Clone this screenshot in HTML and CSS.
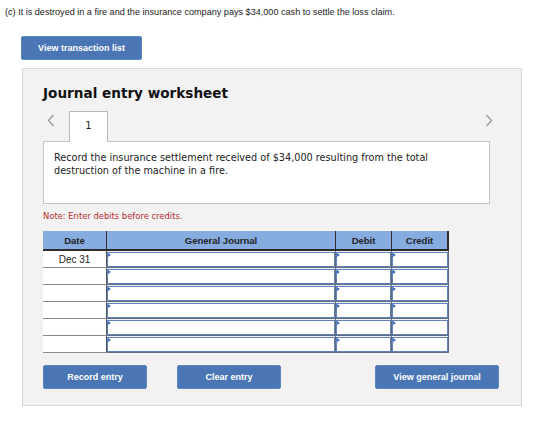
FILE: index.html
```html
<!DOCTYPE html>
<html>
<head>
    <title>Journal entry worksheet</title>
    <link rel="stylesheet" href="styles.css">
</head>
<body>
    <p class="question">(<i>c</i>) It is destroyed in a fire and the insurance company pays $34,000 cash to settle the loss claim.</p>

    <button class="btn btn-list">View transaction list</button>

    <div class="worksheet">
        <h2>Journal entry worksheet</h2>

        <div class="tabs">
            <span class="arrow">
                <svg width="8" height="13" viewBox="0 0 8 13"><path d="M6.5 1 L1.5 6.5 L6.5 12" fill="none" stroke="#9a9a9a" stroke-width="1.4"/></svg>
            </span>
            <span class="tab">1</span>
            <span class="arrow right">
                <svg width="8" height="13" viewBox="0 0 8 13"><path d="M1.5 1 L6.5 6.5 L1.5 12" fill="none" stroke="#9a9a9a" stroke-width="1.4"/></svg>
            </span>
        </div>

        <div class="task">
            Record the insurance settlement received of $34,000 resulting from the total destruction of the machine in a fire.
        </div>

        <p class="note">Note: Enter debits before credits.</p>

        <table class="journal">
            <thead>
                <tr>
                    <th class="c-date">Date</th>
                    <th class="c-acct">General Journal</th>
                    <th class="c-num">Debit</th>
                    <th class="c-num">Credit</th>
                </tr>
            </thead>
            <tbody>
                <tr>
                    <td class="date">Dec 31</td>
                    <td class="in"><div class="box"></div></td>
                    <td class="in"><div class="box"></div></td>
                    <td class="in"><div class="box"></div></td>
                </tr>
                <tr>
                    <td class="date"></td>
                    <td class="in"><div class="box"></div></td>
                    <td class="in"><div class="box"></div></td>
                    <td class="in"><div class="box"></div></td>
                </tr>
                <tr>
                    <td class="date"></td>
                    <td class="in"><div class="box"></div></td>
                    <td class="in"><div class="box"></div></td>
                    <td class="in"><div class="box"></div></td>
                </tr>
                <tr>
                    <td class="date"></td>
                    <td class="in"><div class="box"></div></td>
                    <td class="in"><div class="box"></div></td>
                    <td class="in"><div class="box"></div></td>
                </tr>
                <tr>
                    <td class="date"></td>
                    <td class="in"><div class="box"></div></td>
                    <td class="in"><div class="box"></div></td>
                    <td class="in"><div class="box"></div></td>
                </tr>
                <tr>
                    <td class="date"></td>
                    <td class="in"><div class="box"></div></td>
                    <td class="in"><div class="box"></div></td>
                    <td class="in"><div class="box"></div></td>
                </tr>
            </tbody>
        </table>

        <div class="actions">
            <button class="btn btn-record">Record entry</button>
            <button class="btn btn-clear">Clear entry</button>
            <button class="btn btn-view">View general journal</button>
        </div>
    </div>
</body>
</html>
```

FILE: styles.css
```css
body {
    margin: 0;
    background: white;
    font-family: "Liberation Sans", Arial, sans-serif;
    color: #222;
}
.question {
    margin: 0;
    padding: 6px 0 0 5px;
    font-size: 9.1px;
    line-height: 12px;
}
.btn {
    display: block;
    background: #4a76b5;
    color: white;
    border: 1px solid #5c86c0;
    border-radius: 2px;
    font-family: "Liberation Sans", Arial, sans-serif;
    font-weight: bold;
    font-size: 9px;
    height: 24px;
    padding: 0;
    cursor: pointer;
}
.btn-list {
    margin: 18px 0 0 21px;
    width: 121px;
}
.worksheet {
    margin: 8px 0 0 22px;
    width: 468px;
    height: 320px;
    padding: 8px 10px 8px 20px;
    background: #f2f2f2;
    border: 1px solid #d6d6d6;
    border-top-color: #dcdcdc;
}
.worksheet h2 {
    margin: 7px 0 0 0;
    font-family: "DejaVu Sans", Verdana, sans-serif;
    font-size: 13.6px;
    line-height: 18px;
    font-weight: bold;
    color: #111;
}
.tabs {
    display: flex;
    align-items: flex-end;
    width: 450px;
    height: 31px;
    margin-top: 8px;
}
.arrow {
    display: flex;
    align-self: flex-start;
    width: 22px;
    padding: 4px 0 0 4px;
}
.arrow.right {
    margin-left: auto;
    width: 8px;
    padding-left: 0;
}
.tab {
    width: 37px;
    height: 30px;
    background: white;
    border: 1px solid #b8b8b8;
    border-bottom: none;
    margin-bottom: -1px;
    position: relative;
    font-family: "DejaVu Sans", Verdana, sans-serif;
    font-size: 10px;
    text-align: center;
    line-height: 28px;
}
.task {
    width: 425px;
    height: 52px;
    background: white;
    border: 1px solid #c4c4c4;
    padding: 9px 10px 0 10px;
    font-family: "DejaVu Sans", Verdana, sans-serif;
    font-size: 9.7px;
    line-height: 13px;
    color: #222;
}
.note {
    margin: 7px 0 0 0;
    font-family: "DejaVu Sans", Verdana, sans-serif;
    font-size: 8.4px;
    line-height: 10px;
    color: #b52c2c;
}
.journal {
    margin-top: 10px;
    border-collapse: collapse;
    width: 401px;
    table-layout: fixed;
}
.journal th {
    background: #86ace0;
    height: 18px;
    padding: 0;
    font-size: 9.5px;
    font-weight: bold;
    color: #222;
    border-right: 1px solid #2c2c2c;
    border-bottom: 2px solid #2c2c2c;
}
.journal th:last-child {
    border-right-width: 2px;
}
.c-date { width: 63px; }
.c-acct { width: 228px; }
.c-num { width: 55px; }
.journal td {
    height: 16px;
    padding: 0;
}
.date {
    background: white;
    text-align: center;
    font-size: 10px;
    border-bottom: 1px solid #8a8a8a;
    border-right: 1px solid #555;
}
.in {
    border: 1px solid #606c80;
}
.box {
    position: relative;
    height: 13px;
    background: white;
    border: 1.5px solid #5f82bb;
}
.box::before {
    content: "";
    position: absolute;
    left: 0;
    top: 0;
    border-top: 2px solid transparent;
    border-bottom: 2px solid transparent;
    border-left: 3px solid #3f6fc0;
}
.actions {
    display: flex;
    margin-top: 12px;
    width: 456px;
}
.actions .btn {
    height: 24px;
}
.btn-record { width: 104px; }
.btn-clear { width: 104px; margin-left: 30px; }
.btn-view { width: 124px; margin-left: auto; }
```
